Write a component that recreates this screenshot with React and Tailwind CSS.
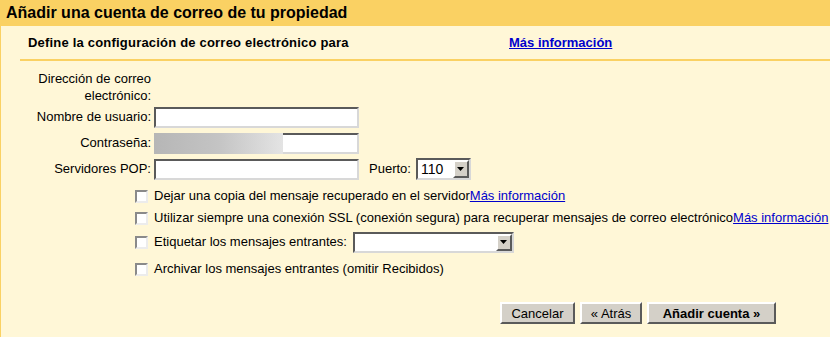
import React from 'react';

// Classic Windows-style inset field border
const inset = 'border-2 border-t-[#5a5a5a] border-l-[#5a5a5a] border-b-[#d8d8d8] border-r-[#d8d8d8] bg-white';
const raised = 'border-2 border-t-white border-l-white border-b-[#5a5a5a] border-r-[#5a5a5a] bg-[#d4d0c8]';

function Arrow() {
  return (
    <div className={`w-[16px] h-full ${raised} flex items-center justify-center`}>
      <svg width="7" height="4" viewBox="0 0 7 4">
        <path d="M0 0h7L3.5 4z" fill="#000" />
      </svg>
    </div>
  );
}

function Check() {
  return <div className="w-[13px] h-[13px] shrink-0 border-2 border-t-[#8a8a8a] border-l-[#8a8a8a] border-b-[#ececec] border-r-[#ececec] bg-white" />;
}

function Link({ children }) {
  return <a className="text-[#0000cc] underline cursor-pointer">{children}</a>;
}

export default function App() {
  return (
    <div className="w-[830px] h-[337px] overflow-hidden bg-[#fff7d7] border-l border-[#fad163] text-[13px] text-black font-['Liberation_Sans',Arial,sans-serif]">
      {/* title bar */}
      <div className="h-[26px] bg-[#fad163] pl-[5px] flex items-center text-[16px] font-bold">
        Añadir una cuenta de correo de tu propiedad
      </div>

      {/* sub header */}
      <div className="ml-[19px] h-[35px] border-b-2 border-[#fad163] flex items-center pl-[8px] text-[13px] font-bold">
        <span className="w-[481px] tracking-[0.2px]">Define la configuración de correo electrónico para</span>
        <Link>Más información</Link>
      </div>

      {/* form */}
      <div className="mt-[9px] grid grid-cols-[131px_auto] gap-x-[3px] pl-[19px]">
        <div className="text-right leading-[17px]">Dirección de correo electrónico:</div>
        <div />

        <div className="text-right h-[26px] flex items-center justify-end">Nombre de usuario:</div>
        <div className="flex items-center">
          <div className={`w-[205px] h-[21px] ${inset}`} />
        </div>

        <div className="text-right h-[26px] flex items-center justify-end">Contraseña:</div>
        <div className="flex items-center">
          <div className={`relative w-[205px] h-[21px] ${inset}`}>
            <div className="absolute -left-[2px] -top-[2px] w-[129px] h-[21px] bg-gradient-to-r from-[#b6b6b6] via-[#c4c4c4] to-[#e4e4e4]" />
          </div>
        </div>

        <div className="text-right h-[26px] flex items-center justify-end">Servidores POP:</div>
        <div className="flex items-center">
          <div className={`w-[205px] h-[21px] ${inset}`} />
          <span className="ml-[10px]">Puerto:</span>
          <div className={`ml-[5px] w-[55px] h-[22px] ${inset} flex items-stretch`}>
            <span className="flex-1 pl-[3px] leading-[18px] text-[14px]">110</span>
            <Arrow />
          </div>
        </div>
      </div>

      {/* options */}
      <div className="pl-[134px]">
        <div className="mt-[4px] h-[20px] flex items-center">
          <Check />
          <span className="ml-[6px] whitespace-nowrap">Dejar una copia del mensaje recuperado en el servidor</span>
          <Link>Más información</Link>
        </div>
        <div className="mt-[2px] h-[20px] flex items-center whitespace-nowrap">
          <Check />
          <span className="ml-[6px]">Utilizar siempre una conexión SSL (conexión segura) para recuperar mensajes de correo electrónico</span>
          <Link>Más información</Link>
        </div>
        <div className="mt-[4px] h-[20px] flex items-center">
          <Check />
          <span className="ml-[6px]">Etiquetar los mensajes entrantes:</span>
          <div className={`ml-[6px] w-[161px] h-[21px] ${inset} flex items-stretch`}>
            <span className="flex-1" />
            <Arrow />
          </div>
        </div>
        <div className="mt-[7px] h-[20px] flex items-center">
          <Check />
          <span className="ml-[6px]">Archivar los mensajes entrantes (omitir Recibidos)</span>
        </div>
      </div>

      {/* buttons */}
      <div className="mt-[23px] flex justify-end gap-[5px] pr-[54px]">
        <button className={`w-[75px] h-[22px] ${raised} text-[13px]`}>Cancelar</button>
        <button className={`w-[62px] h-[22px] ${raised} text-[13px]`}>« Atrás</button>
        <button className={`w-[129px] h-[22px] ${raised} text-[13px] font-bold`}>Añadir cuenta »</button>
      </div>
    </div>
  );
}
